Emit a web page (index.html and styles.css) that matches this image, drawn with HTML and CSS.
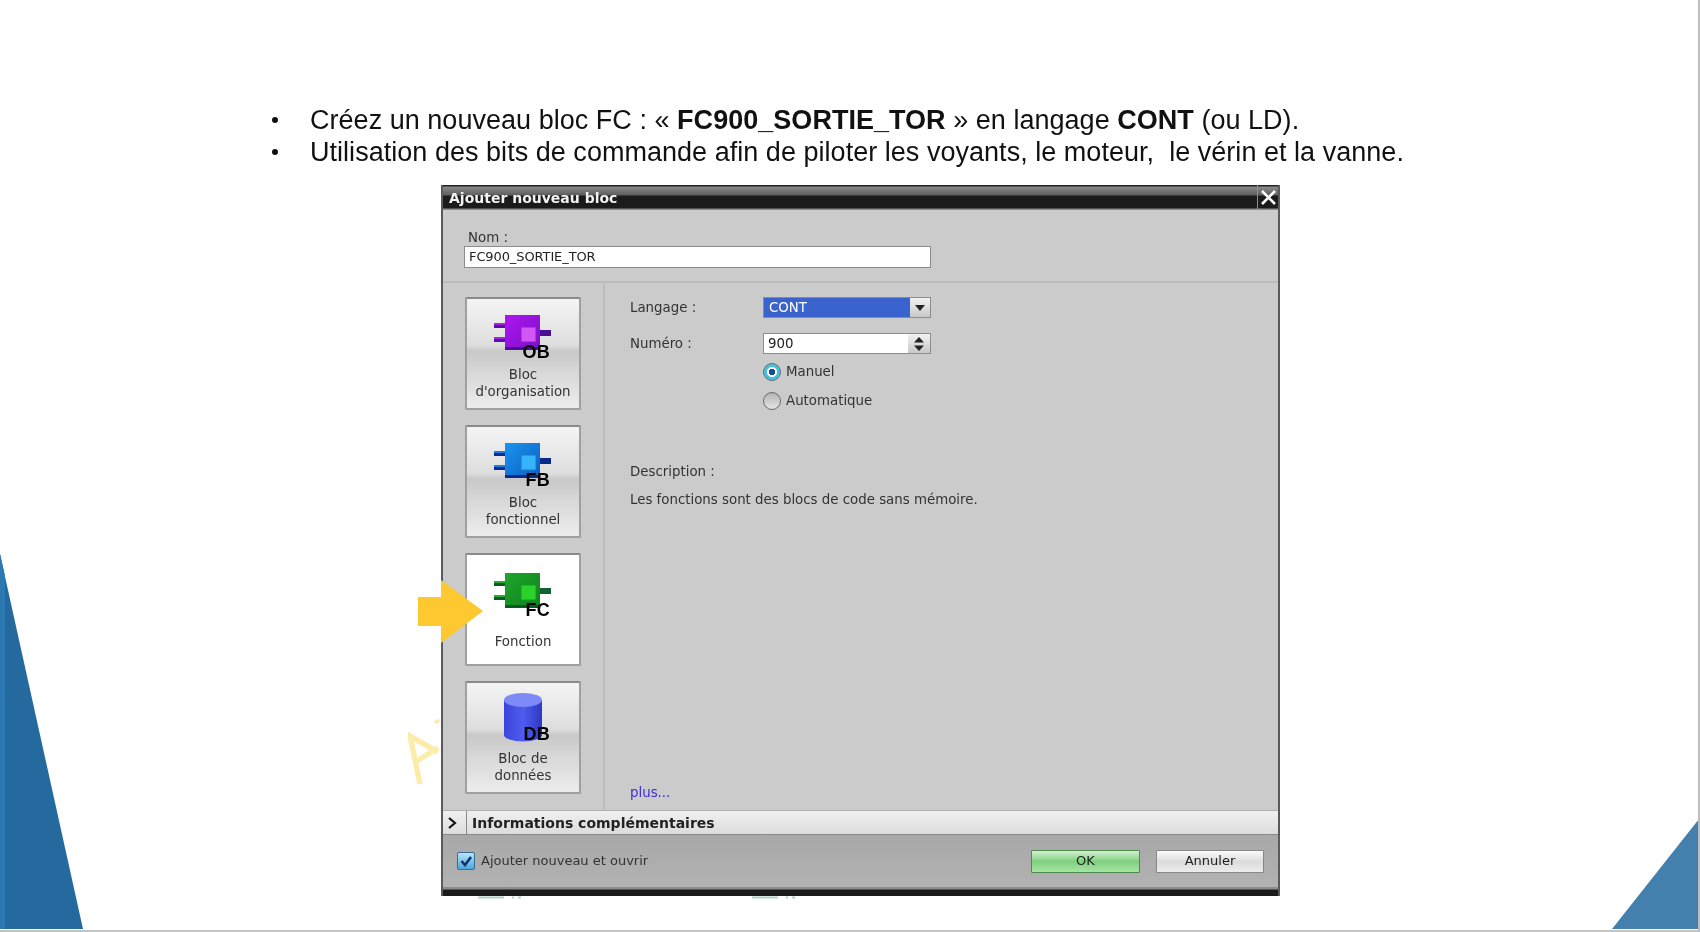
FILE: index.html
```html
<!DOCTYPE html>
<html lang="fr">
<head>
<meta charset="utf-8">
<title>Ajouter nouveau bloc</title>
<link rel="stylesheet" href="styles.css">
</head>
<body>
<main class="slide">
  <svg class="corner corner-left" width="84" height="376" viewBox="0 0 84 376"><path d="M0 0L83 375H0Z" fill="#256a9e"/><path d="M0 0L5 22V375H0Z" fill="#2b78b2"/></svg>
  <svg class="corner corner-right" width="88" height="111" viewBox="0 0 88 111"><path d="M87 0V110H0Z" fill="#4480ae"/></svg>

  <ul class="bullets">
    <li>Créez un nouveau bloc FC : « <b>FC900_SORTIE_TOR</b> » en langage <b>CONT</b> (ou LD).</li>
    <li>Utilisation des bits de commande afin de piloter les voyants, le moteur,&nbsp; le vérin et la vanne.</li>
  </ul>

  <section class="dialog">
    <header class="titlebar">
      <span class="title">Ajouter nouveau bloc</span>
      <span class="close"><svg width="17" height="17" viewBox="0 0 17 17"><path d="M2 2L15 15M15 2L2 15" stroke="#fff" stroke-width="2.6" fill="none"/></svg></span>
    </header>

    <div class="name-row">
      <label class="name-label">Nom :</label>
      <div class="name-input">FC900_SORTIE_TOR</div>
    </div>

    <div class="body">
      <nav class="blocks">
        <div class="block">
          <div class="icon">
            <svg width="60" height="46" viewBox="0 0 60 46">
              <defs><linearGradient id="ob" x1="0" y1="0" x2="1" y2="1"><stop offset="0" stop-color="#b015f0"/><stop offset="1" stop-color="#7a10c8"/></linearGradient></defs>
              <path d="M1 8H12V13H1ZM1 22H12V27H1Z" fill="#5a10a8"/><path d="M1 8H12V10H1ZM1 22H12V24H1Z" fill="#a522e0"/>
              <path d="M47 15H58V21H47Z" fill="#4a0d96"/>
              <rect x="12" y="0" width="35" height="35" fill="url(#ob)"/><rect x="12" y="32" width="35" height="3" fill="#4a0d96"/>
              <rect x="28" y="12" width="15" height="15" fill="#d257f5" stroke="#8d1ad0"/>
            </svg>
            <span class="badge">OB</span>
          </div>
          <span class="label">Bloc<br>d'organisation</span>
        </div>
        <div class="block">
          <div class="icon">
            <svg width="60" height="46" viewBox="0 0 60 46">
              <defs><linearGradient id="fb" x1="0" y1="0" x2="1" y2="1"><stop offset="0" stop-color="#1a94f0"/><stop offset="1" stop-color="#0a5ec0"/></linearGradient></defs>
              <path d="M1 8H12V13H1ZM1 22H12V27H1Z" fill="#0a2a9a"/><path d="M1 8H12V10H1ZM1 22H12V24H1Z" fill="#1a80e0"/>
              <path d="M47 15H58V21H47Z" fill="#0a2a8a"/>
              <rect x="12" y="0" width="35" height="35" fill="url(#fb)"/><rect x="12" y="32" width="35" height="3" fill="#0a2a8a"/>
              <rect x="28" y="12" width="15" height="15" fill="#36b4fa" stroke="#1a78d0"/>
            </svg>
            <span class="badge">FB</span>
          </div>
          <span class="label">Bloc<br>fonctionnel</span>
        </div>
        <div class="block block-active">
          <div class="icon icon-low">
            <svg width="60" height="46" viewBox="0 0 60 46">
              <defs><linearGradient id="fc" x1="0" y1="0" x2="1" y2="1"><stop offset="0" stop-color="#1fa52c"/><stop offset="1" stop-color="#0f8020"/></linearGradient></defs>
              <path d="M1 8H12V13H1ZM1 22H12V27H1Z" fill="#0b5a20"/><path d="M1 8H12V10H1ZM1 22H12V24H1Z" fill="#22b030"/>
              <path d="M47 15H58V21H47Z" fill="#126038"/>
              <rect x="12" y="0" width="35" height="35" fill="url(#fc)"/><rect x="12" y="32" width="35" height="3" fill="#0b5a20"/>
              <rect x="28" y="12" width="15" height="15" fill="#2cd22c" stroke="#149a20"/>
            </svg>
            <span class="badge">FC</span>
          </div>
          <span class="label">Fonction</span>
        </div>
        <div class="block">
          <div class="icon icon-db">
            <svg width="60" height="52" viewBox="0 0 60 52">
              <defs><linearGradient id="db" x1="0" y1="0" x2="1" y2="0"><stop offset="0" stop-color="#3a46d8"/><stop offset=".5" stop-color="#4f5cf0"/><stop offset="1" stop-color="#2e38c0"/></linearGradient></defs>
              <path d="M11 8V43A19 6.5 0 0 0 49 43V8Z" fill="url(#db)"/>
              <ellipse cx="30" cy="8" rx="19" ry="7" fill="#7d8af8"/>
            </svg>
            <span class="badge badge-db">DB</span>
          </div>
          <span class="label">Bloc de<br>données</span>
        </div>
      </nav>

      <div class="panel">
        <div class="form">
          <span class="form-label">Langage :</span>
          <div class="select">
            <span class="select-value">CONT</span>
            <span class="select-btn"><svg width="10" height="6" viewBox="0 0 10 6"><path d="M0 0H10L5 6Z" fill="#222"/></svg></span>
          </div>
          <span class="form-label">Numéro :</span>
          <div class="spin">
            <span class="spin-value">900</span>
            <span class="spin-btn"><svg width="12" height="16" viewBox="0 0 12 16"><path d="M1 6.5H11L6 1ZM1 9.5H11L6 15Z" fill="#222"/></svg></span>
          </div>
        </div>
        <div class="radios">
          <div class="radio-row"><span class="radio radio-on"></span><span>Manuel</span></div>
          <div class="radio-row"><span class="radio"></span><span>Automatique</span></div>
        </div>
        <p class="desc-title">Description :</p>
        <p class="desc">Les fonctions sont des blocs de code sans mémoire.</p>
        <a class="more">plus...</a>
      </div>
    </div>

    <div class="infobar">
      <span class="chevron"><svg width="10" height="12" viewBox="0 0 10 12"><path d="M2 1L8 6L2 11" stroke="#111" stroke-width="2.2" fill="none"/></svg></span>
      <span class="info-title">Informations complémentaires</span>
    </div>

    <footer class="footer">
      <div class="check-row">
        <span class="check"><svg width="14" height="14" viewBox="0 0 14 14"><path d="M2.5 7L6 11L12 3" stroke="#14306e" stroke-width="2.6" fill="none"/></svg></span>
        <span>Ajouter nouveau et ouvrir</span>
      </div>
      <div class="actions">
        <button class="btn btn-ok">OK</button>
        <button class="btn btn-cancel">Annuler</button>
      </div>
    </footer>
    <div class="strip"></div>
  </section>

  <svg class="arrow" width="66" height="64" viewBox="0 0 66 64"><path d="M0 17H23V0L65 31L23 63V46H0Z" fill="#fdc830"/></svg>
  <svg class="scribble" width="36" height="72" viewBox="0 0 36 72"><path d="M12 66L2 18L30 34M7 44L30 30M28 2L30 5" stroke="#fcecab" stroke-width="5.5" fill="none"/></svg>
  <svg class="cut cut-a" width="44" height="3" viewBox="0 0 44 3"><path d="M0 1.5H26M34 1.5H36M40 1.5H43" stroke="#b4d0c4" stroke-width="2" fill="none"/></svg>
  <svg class="cut cut-b" width="44" height="3" viewBox="0 0 44 3"><path d="M0 1.5H26M34 1.5H36M40 1.5H43" stroke="#b4d0c4" stroke-width="2" fill="none"/></svg>
</main>
</body>
</html>
```
FILE: styles.css
```css
* { box-sizing: border-box; }
html, body { margin: 0; padding: 0; background: #fff; }
.slide {
  position: relative;
  width: 1700px;
  height: 932px;
  overflow: hidden;
  background: #fff;
  border-right: 2px solid #bdbdbd;
  border-bottom: 2px solid #c4c4c4;
  padding-top: 104px;
  display: flex;
  flex-direction: column;
}
.corner { position: absolute; display: block; }
.corner-left { left: 0; bottom: 0; }
.corner-right { right: -2px; bottom: 0; }

.bullets {
  list-style: none;
  margin: 0 0 17px 0;
  padding: 0 0 0 310px;
  font: 27px/32px "Liberation Sans", Arial, sans-serif;
  letter-spacing: .03px;
  color: #111;
  filter: blur(.3px);
}
.bullets li { position: relative; white-space: nowrap; }
.bullets li::before {
  content: "";
  position: absolute;
  left: -38px;
  top: 13px;
  width: 6px;
  height: 6px;
  border-radius: 50%;
  background: #111;
}

.dialog {
  width: 839px;
  height: 711px;
  flex: none;
  margin-left: 441px;
  display: flex;
  flex-direction: column;
  background: #cbcbcb;
  border-left: 2px solid #5a5a5a;
  border-right: 2px solid #5a5a5a;
  font: 13.35px/16px "DejaVu Sans", Verdana, sans-serif;
  color: #333;
  filter: blur(.35px);
}
.titlebar {
  height: 25px;
  flex: none;
  display: flex;
  justify-content: space-between;
  background: linear-gradient(#222 0, #222 1px, #8a8a8a 2px, #5e5e5e 10px, #1b1b1b 11px, #1b1b1b 23px, #8f8f8f 24px);
}
.title {
  padding: 3px 0 0 6px;
  font-weight: 700;
  font-size: 14px;
  line-height: 20px;
  color: #f2f2f2;
}
.close {
  width: 21px;
  display: flex;
  align-items: center;
  justify-content: center;
  border-left: 1px solid #8f8f8f;
}

.name-row {
  height: 73px;
  flex: none;
  padding: 20px 0 0 21px;
  border-bottom: 2px solid #bcbcbc;
}
.name-label { display: block; padding-left: 4px; height: 16px; line-height: 15px; }
.name-input {
  width: 467px;
  height: 22px;
  padding-left: 4px;
  background: #fff;
  border: 1px solid #8c8c8c;
  line-height: 20px;
  font-size: 13px;
  letter-spacing: -.1px;
  color: #222;
}

.body { flex: 1; display: flex; min-height: 0; }
.blocks {
  width: 162px;
  flex: none;
  display: flex;
  flex-direction: column;
  gap: 15px;
  padding: 14px 0 0 22px;
  border-right: 2px solid #bcbcbc;
}
.block {
  width: 116px;
  height: 113px;
  flex: none;
  display: flex;
  flex-direction: column;
  align-items: center;
  border: 2px solid #a0a0a0;
  border-top-color: #8a8a8a;
  border-radius: 2px;
  background: linear-gradient(#f4f4f4 0, #dedede 42%, #c9c9c9 48%, #d8d8d8 68%, #ececec 100%);
  text-align: center;
  color: #333;
}
.block-active { background: #fff; }
.icon { position: relative; width: 60px; height: 46px; margin-top: 16px; flex: none; }
.icon svg { display: block; }
.icon-low { margin-top: 18px; }
.icon-db { margin-top: 9px; height: 52px; }
.badge {
  position: absolute;
  right: 3px;
  top: 29px;
  font: 700 18px/16px "Liberation Sans", Arial, sans-serif;
  letter-spacing: .3px;
  color: #000;
}
.badge-db { top: 34px; }
.label { height: 33px; margin-top: 6px; line-height: 16.5px; display: flex; align-items: center; }
.icon-low + .label { margin-top: 7px; }
.icon-db + .label { margin-top: 7px; }

.panel {
  flex: 1;
  display: flex;
  flex-direction: column;
  padding: 14px 0 9px 25px;
}
.form {
  display: grid;
  grid-template-columns: 133px 168px;
  grid-auto-rows: 21px;
  row-gap: 15px;
  align-items: center;
}
.select, .spin {
  display: flex;
  height: 21px;
  border: 1px solid #8c8c8c;
}
.select { background: #3b63cd; color: #fff; }
.select-value { flex: 1; padding-left: 5px; line-height: 19px; }
.select-btn, .spin-btn {
  width: 20px;
  display: flex;
  align-items: center;
  justify-content: center;
  background: linear-gradient(#f2f2f2, #c8c8c8);
}
.spin { background: #fff; color: #222; }
.spin-value { flex: 1; padding-left: 4px; line-height: 19px; }
.spin-btn { width: 22px; }

.radios {
  margin: 9px 0 0 133px;
  display: flex;
  flex-direction: column;
  gap: 11px;
}
.radio-row { display: flex; align-items: center; gap: 5px; height: 18px; }
.radio {
  width: 18px;
  height: 18px;
  border-radius: 50%;
  border: 1px solid #6c6c6c;
  background: linear-gradient(#b4b4b4, #e4e4e4);
}
.radio-on { background: radial-gradient(circle, #14508f 0, #14508f 3px, #fff 3.5px, #fff 4.5px, #46bfe0 5.5px); }
.desc-title { margin: 54px 0 0; }
.desc { margin: 12px 0 0; }
.more { margin-top: auto; color: #3a2fd0; }

.infobar {
  height: 25px;
  flex: none;
  display: flex;
  background: linear-gradient(#f0f0f0, #dcdcdc);
  border-top: 1px solid #b0b0b0;
  border-bottom: 1px solid #8a8a8a;
}
.chevron {
  width: 24px;
  padding-right: 5px;
  display: flex;
  align-items: center;
  justify-content: center;
  border-right: 1px solid #8a8a8a;
}
.info-title {
  padding-left: 5px;
  font-weight: 700;
  font-size: 14px;
  line-height: 24px;
  color: #222;
}

.footer {
  height: 52px;
  flex: none;
  display: flex;
  align-items: center;
  justify-content: space-between;
  padding: 0 14px 0 14px;
  background: linear-gradient(#a8a8a8, #b2b2b2);
  font-size: 13px;
}
.check-row { display: flex; align-items: center; gap: 6px; color: #333; }
.check {
  width: 18px;
  height: 18px;
  display: flex;
  align-items: center;
  justify-content: center;
  border: 1px solid #3a6a98;
  border-radius: 2px;
  background: linear-gradient(#b8e4f8, #4aa8dc);
}
.actions { display: flex; gap: 16px; }
.btn {
  width: 108px;
  height: 23px;
  padding: 0;
  font: 13px/16px "DejaVu Sans", Verdana, sans-serif;
  color: #222;
  border-radius: 1px;
}
.btn-ok {
  width: 109px;
  background: linear-gradient(#d4f0d0, #7fd07f 50%, #a8e4a4);
  border: 1px solid #4f8a4f;
}
.btn-cancel {
  background: linear-gradient(#fafafa, #dcdcdc 50%, #ececec);
  border: 1px solid #888;
}
.strip {
  height: 9px;
  flex: none;
  background: linear-gradient(#8c8c8c 0, #8c8c8c 2px, #1b1b1b 3px);
}

.arrow { position: absolute; left: 418px; top: 580px; display: block; }
.scribble { position: absolute; left: 408px; top: 718px; display: block; filter: blur(.6px); }
.cut { position: absolute; top: 896px; display: block; }
.cut-a { left: 478px; }
.cut-b { left: 752px; }
```
